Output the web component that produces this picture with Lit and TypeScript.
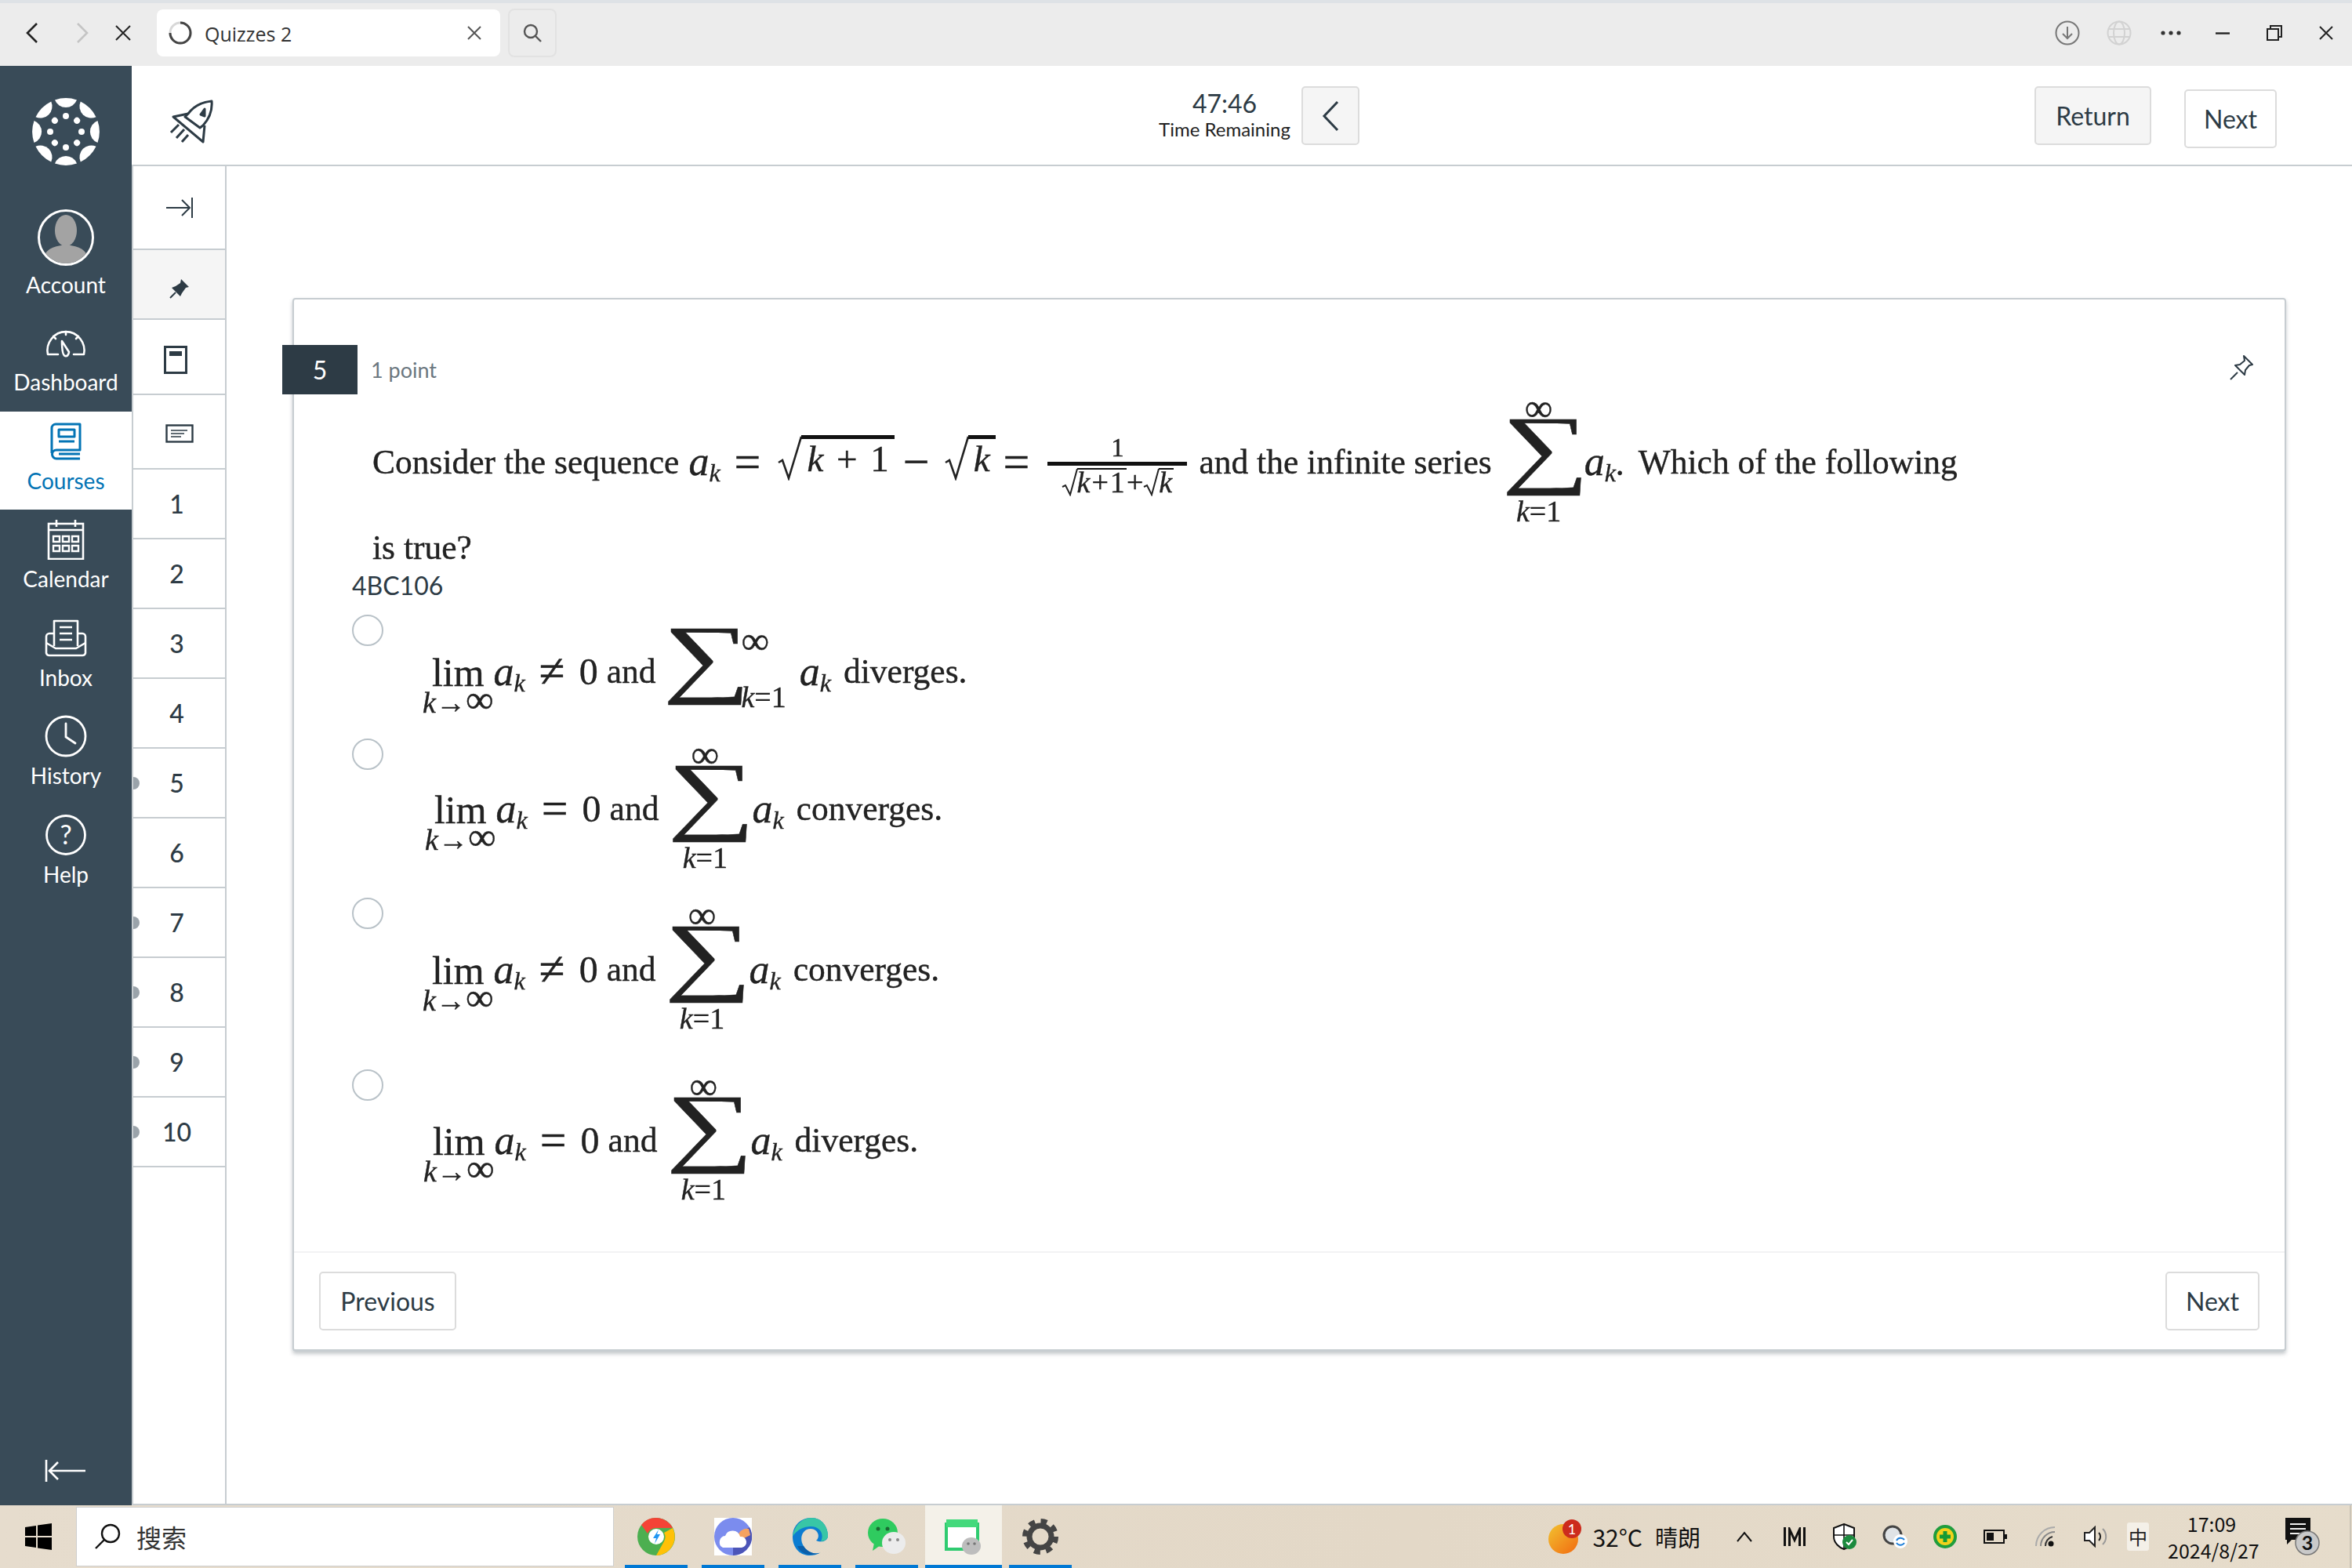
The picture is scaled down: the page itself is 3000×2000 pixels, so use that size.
import { LitElement, html, css, svg } from 'lit';
import { customElement } from 'lit/decorators.js';

const icon = (w: number, h: number, body: unknown, cls = '') =>
  html`<svg class=${cls} width=${w} height=${h} viewBox="0 0 ${w} ${h}" fill="none">${body}</svg>`;

const logo = icon(
  86,
  86,
  svg`<g fill="#fff">${[0, 45, 90, 135, 180, 225, 270, 315].map(
    (a) => svg`<g transform="rotate(${a} 43 43)">
      <path d="M29 2.5A43 43 0 0 1 57 2.5A15 15 0 0 1 29 2.5Z" />
      <circle cx="43" cy="23" r="4" />
    </g>`
  )}</g>`
);

const navItems = [
  {
    label: 'Dashboard',
    icon: icon(
      54,
      38,
      svg`<g stroke="#fff" stroke-width="2.6" stroke-linecap="round" stroke-linejoin="round">
        <path d="M17 34H4A23.500 24 0 1 1 50 34H37" />
        <path d="M22 17L31 31Q30 37 26 36Q22 35 22 17Z" />
        <path d="M27 5V9M11 11L14 14M43 11L40 14" />
      </g>`
    ),
  },
  {
    label: 'Courses',
    active: true,
    icon: icon(
      42,
      48,
      svg`<g stroke="#0374b5" stroke-width="3" stroke-linejoin="round">
        <path d="M3 39V7A5 5 0 0 1 8 2H39V35H9A5.500 5.500 0 0 0 9 46H39M12 40H39" />
        <rect x="12" y="9" width="20" height="9" />
        <path d="M12 24H32" />
      </g>`
    ),
  },
  {
    label: 'Calendar',
    icon: icon(
      48,
      52,
      svg`<g stroke="#fff" stroke-width="2.600">
        <rect x="2" y="6" width="44" height="45" />
        <path d="M2 14H46M12 1V10M36 1V10" />
        <path d="M8 22H16V29H8ZM20 22H28V29H20ZM32 22H40V29H32ZM8 34H16V41H8ZM20 34H28V41H20ZM32 34H40V41H32Z" stroke-width="2.4" />
      </g>`
    ),
  },
  {
    label: 'Inbox',
    icon: icon(
      54,
      48,
      svg`<g stroke="#fff" stroke-width="2.600" stroke-linejoin="round">
        <path d="M12 34V2H42V34" />
        <path d="M19 10H35M19 18H35M19 26H35" />
        <path d="M12 18H6A4 4 0 0 0 2 22V43A4 4 0 0 0 6 46H48A4 4 0 0 0 52 43V22A4 4 0 0 0 48 18H42" />
        <path d="M2 30L14 37H40L52 30" />
      </g>`
    ),
  },
  {
    label: 'History',
    icon: icon(
      54,
      54,
      svg`<g stroke="#fff" stroke-width="2.800" stroke-linecap="round">
        <circle cx="27" cy="27" r="25" />
        <path d="M27 11V28L39 36" />
      </g>`
    ),
  },
  {
    label: 'Help',
    icon: icon(
      52,
      52,
      svg`<circle cx="26" cy="26" r="24.500" stroke="#fff" stroke-width="2.800" />
        <text x="26" y="38" text-anchor="middle" fill="#fff" font-family="Lato, sans-serif" font-size="34">?</text>`
    ),
  },
];

const ak = html`<span class="ak"><i>a</i><sub>k</sub></span>`;
const inf = html`<span class="inf">∞</span>`;

// one sum with its limits stacked, or set beside it for the inline variant
const sum = (beside = false) =>
  beside
    ? html`<span class="sum beside">
        <span class="sigma">∑</span>
        <span class="limits"><span>${inf}</span><span><i>k</i>=1</span></span>
      </span>`
    : html`<span class="sum">
        <span class="lim-text">${inf}</span>
        <span class="sigma">∑</span>
        <span class="lim-text"><i>k</i>=1</span>
      </span>`;

const limit = html`<span class="lim"><span>lim</span><small><i>k</i>→${inf}</small></span>`;

// the radical sign is a stretched stroke, its argument stays text
const root = (inner: unknown, small = false) =>
  small
    ? html`<span class="root tiny">
        ${icon(21, 36, svg`<path d="M1 24L5 22L11 34L20 1" stroke="#222" stroke-width="2" />`)}
        <span class="over">${inner}</span>
      </span>`
    : html`<span class="root">
        ${icon(32, 58, svg`<path d="M2 35L7 32L15 55L31 2" stroke="#222" stroke-width="2.600" />`)}
        <span class="over">${inner}</span>
      </span>`;

const k = html`<i>k</i>`;

const options = [
  { top: 13, left: 50, op: '≠', beside: true, word: 'diverges.', height: 158, sumGap: 11, akGap: 17 },
  { top: 11, left: 53, op: '=', beside: false, word: 'converges.', height: 203, sumGap: 13, akGap: 14 },
  { top: 13, left: 50, op: '≠', beside: false, word: 'converges.', height: 219, sumGap: 13, akGap: 14 },
  { top: 12, left: 51, op: '=', beside: false, word: 'diverges.', height: 220, sumGap: 13, akGap: 14 },
];

@customElement('app-root')
export class AppRoot extends LitElement {
  static styles = css`
    :host {
      display: flex;
      flex-direction: column;
      width: 3000px;
      height: 2000px;
      overflow: hidden;
      background: #fff;
      font-family: Lato, sans-serif;
      color: #2d3b45;
    }
    svg {
      display: block;
      flex: none;
    }

    /* browser bar */
    .chrome {
      height: 84px;
      box-sizing: border-box;
      border-top: 4px solid #dee2e6;
      background: #ececec;
      display: flex;
      align-items: center;
      padding: 0 0 4px 16px;
    }
    .chrome .slot {
      width: 50px;
      margin-right: 14px;
      display: flex;
      justify-content: center;
    }
    .chrome .slot.stop {
      margin-left: -12px;
    }
    .tab {
      width: 438px;
      height: 60px;
      margin-left: 4px;
      margin-right: 10px;
      border-radius: 8px;
      background: #fff;
      display: flex;
      align-items: center;
      padding: 0 24px 0 14px;
      box-sizing: border-box;
      gap: 15px;
      font-family: 'Open Sans', sans-serif;
      font-size: 25px;
      color: #333;
    }
    .tab span {
      flex: 1;
      padding-top: 2px;
    }
    .find {
      width: 62px;
      height: 62px;
      box-sizing: border-box;
      border: 2px solid #e2e2e2;
      border-radius: 8px;
      display: flex;
      align-items: center;
      justify-content: center;
    }
    .win {
      margin-left: auto;
      display: flex;
      align-items: center;
    }
    .win div {
      width: 66px;
      display: flex;
      justify-content: center;
    }

    .mid {
      flex: 1;
      display: flex;
      min-height: 0;
    }

    /* global nav */
    .rail {
      width: 168px;
      background: #394b58;
      color: #fff;
      display: flex;
      flex-direction: column;
      align-items: center;
      font-size: 28px;
    }
    .brand {
      height: 174px;
      padding-top: 41px;
      box-sizing: border-box;
    }
    .account {
      height: 141px;
      display: flex;
      flex-direction: column;
      align-items: center;
      padding-top: 9px;
      box-sizing: border-box;
      gap: 7px;
    }
    .avatar {
      width: 72px;
      height: 72px;
      box-sizing: border-box;
      border: 3px solid #fff;
      border-radius: 50%;
      overflow: hidden;
    }
    .item {
      width: 100%;
      height: 125.500px;
      display: flex;
      flex-direction: column;
      align-items: center;
      box-sizing: border-box;
    }
    .item .ic {
      height: 52px;
      margin-top: 12px;
      margin-bottom: 7px;
      display: flex;
      align-items: center;
    }
    .item.active {
      background: #fff;
      color: #0374b5;
    }
    .label {
      line-height: 34px;
    }
    .collapse {
      margin-top: auto;
      margin-bottom: 29px;
    }

    .main {
      flex: 1;
      display: flex;
      flex-direction: column;
      min-width: 0;
      border-bottom: 2px solid #c7cdd1;
    }

    /* quiz header */
    .head {
      height: 128px;
      box-sizing: border-box;
      border-bottom: 2px solid #c7cdd1;
      display: flex;
      align-items: flex-start;
      position: relative;
    }
    .rocket {
      margin: 43px 0 0 47px;
    }
    .timer {
      margin-left: 1204px;
      width: 170px;
      text-align: center;
      margin-top: 30px;
    }
    .timer b {
      display: block;
      font-weight: 400;
      font-size: 32px;
      line-height: 36px;
    }
    .timer span {
      display: block;
      font-size: 24px;
      line-height: 30px;
      color: #222;
      white-space: nowrap;
    }
    .btn {
      box-sizing: border-box;
      height: 75px;
      border: 2px solid #dcdcdc;
      border-radius: 5px;
      background: #fff;
      display: flex;
      align-items: center;
      justify-content: center;
      font-size: 32px;
      color: #2d3b45;
    }
    .btn.grey {
      background: #f5f5f5;
    }
    .chev {
      width: 74px;
      margin: 26px 0 0 13px;
    }
    .return {
      width: 149px;
      margin: 26px 0 0 861px;
    }
    .next {
      width: 118px;
      margin: 30px 0 0 42px;
    }

    .body {
      flex: 1;
      display: flex;
      min-height: 0;
    }

    /* question list */
    .qnav {
      width: 121px;
      box-sizing: border-box;
      border-left: 2px solid #c7cdd1;
      border-right: 2px solid #c7cdd1;
      display: flex;
      flex-direction: column;
    }
    .tool {
      display: flex;
      align-items: center;
      justify-content: center;
      border-bottom: 2px solid #c7cdd1;
      box-sizing: border-box;
    }
    .q {
      height: 89px;
      box-sizing: border-box;
      border-bottom: 2px solid #c7cdd1;
      display: flex;
      align-items: center;
      justify-content: center;
      font-size: 32px;
      font-weight: 500;
      position: relative;
      padding-right: 6px;
    }
    .q.seen::before {
      content: '';
      position: absolute;
      left: 0;
      top: 36px;
      width: 8px;
      height: 16px;
      border-radius: 0 8px 8px 0;
      background: #9aa3aa;
    }

    /* question card */
    .card {
      width: 2543px;
      height: 1344px;
      margin: 168px 0 0 84px;
      box-sizing: border-box;
      border: 2px solid #c7cdd1;
      border-bottom-width: 3px;
      border-radius: 4px;
      box-shadow: 0 3px 5px rgba(90, 100, 110, 0.35);
      display: flex;
      flex-direction: column;
    }
    .qhead {
      display: flex;
      align-items: center;
      margin: 58px 0 0 -15px;
      height: 63px;
    }
    .badge {
      width: 96px;
      height: 63px;
      background: #2d3b45;
      color: #fff;
      font-size: 32px;
      display: flex;
      align-items: center;
      justify-content: center;
    }
    .points {
      margin-left: 17px;
      font-size: 27px;
      color: #6b7780;
    }
    .pin {
      margin-left: auto;
      margin-right: 40px;
      margin-top: -6px;
    }

    /* math, a slightly soft image in the original */
    .m {
      font-family: 'Liberation Serif', serif;
      font-size: 43.5px;
      color: #222;
      filter: blur(0.6px);
      -webkit-text-stroke: 0.4px #222;
      display: flex;
      align-items: center;
      white-space: nowrap;
    }
    .line1 {
      margin: -1px 0 0 100px;
      height: 173px;
    }
    .line2 {
      margin: -2px 0 0 100px;
      height: 50px;
    }
    .ak {
      font-size: 52px;
    }
    .ak sub {
      font-size: 32px;
      font-style: italic;
      vertical-align: -8px;
      line-height: 0;
    }
    .op {
      font-size: 60px;
      line-height: 50px;
    }
    .num {
      font-size: 48px;
    }
    .inf {
      font-size: 50px;
      line-height: 26px;
    }
    .sigma {
      font-size: 112px;
      line-height: 100px;
      height: 100px;
      width: 68px;
      margin: 0 12px;
      text-align: center;
      display: block;
      font-weight: 400;
      transform: translateY(-17px) scaleX(1.4);
    }
    .sum {
      display: flex;
      flex-direction: column;
      align-items: center;
      margin-top: -4px;
    }
    .sum.beside {
      flex-direction: row;
    }
    .lim-text,
    .limits {
      font-size: 38px;
      line-height: 30px;
      height: 30px;
    }
    .limits {
      display: flex;
      flex-direction: column;
      justify-content: space-between;
      height: 100px;
      margin-left: 6px;
    }
    .lim {
      display: flex;
      flex-direction: column;
      align-items: center;
      padding-top: 36px;
      font-size: 50px;
      line-height: 50px;
    }
    .lim small {
      font-size: 38px;
      line-height: 30px;
      height: 36px;
      margin-top: -4px;
    }
    .root {
      display: inline-flex;
      align-items: flex-start;
    }
    .over {
      border-top: 5px solid #111;
      margin-left: -1px;
      line-height: 50px;
      font-size: 47px;
      padding: 0 7px;
      word-spacing: 5px;
    }
    .tiny .over {
      border-top-width: 2px;
      line-height: 32px;
      font-size: 38px;
      padding: 0;
      word-spacing: 0;
      letter-spacing: 2px;
    }
    .frac {
      display: flex;
      flex-direction: column;
      align-items: center;
      font-size: 33px;
      width: 178px;
      line-height: 36px;
      margin-top: 8px;
    }
    .frac hr {
      width: 100%;
      height: 5px;
      background: #111;
      border: 0;
      margin: 0 0 3px;
    }
    .den {
      display: flex;
      align-items: flex-start;
      font-size: 38px;
    }
    .code {
      margin: 1px 0 14px 74px;
      height: 46px;
      line-height: 46px;
      font-size: 32px;
    }
    .option {
      display: flex;
      align-items: flex-start;
      margin-left: 74px;
      box-sizing: border-box;
    }
    .radio {
      width: 40px;
      height: 40px;
      box-sizing: border-box;
      border: 2px solid #b9c2c8;
      border-radius: 50%;
      background: #fff;
      flex: none;
    }
    .foot {
      margin-top: auto;
      height: 125px;
      box-sizing: border-box;
      border-top: 2px solid #f2f3f4;
      display: flex;
      align-items: center;
      justify-content: space-between;
      padding: 0 32px;
    }
    .foot .btn {
      height: 75px;
    }
    .prev {
      width: 175px;
    }
    .foot .fnext {
      width: 120px;
    }

    /* windows taskbar */
    .task {
      height: 80px;
      background: linear-gradient(90deg, #e6dccd, #e3d8c7 60%, #e6dccb);
      display: flex;
      align-items: center;
      font-family: 'Noto Sans CJK SC', sans-serif;
      color: #111;
    }
    .start {
      width: 97px;
      display: flex;
      justify-content: center;
    }
    .search {
      width: 686px;
      height: 76px;
      box-sizing: border-box;
      background: #fff;
      border: 1px solid #cfcfcf;
      display: flex;
      align-items: center;
      gap: 20px;
      padding-left: 22px;
      font-size: 32px;
      color: #333;
    }
    .apps {
      display: flex;
      margin-left: 5px;
      height: 80px;
    }
    .app {
      width: 98px;
      height: 80px;
      box-sizing: border-box;
      display: flex;
      align-items: center;
      justify-content: center;
      position: relative;
    }
    .app::after {
      content: '';
      position: absolute;
      left: 9px;
      right: 9px;
      bottom: 0;
      height: 4px;
      background: #0078d4;
    }
    .app.on {
      background: #f4f1e9;
    }
    .app.on::after {
      left: 0;
      right: 0;
    }
    .tray {
      margin-left: auto;
      display: flex;
      align-items: center;
      height: 80px;
    }
    .weather {
      display: flex;
      align-items: center;
      font-size: 30px;
      margin-right: 24px;
    }
    .weather span {
      margin-left: 14px;
    }
    .weather .cn {
      margin-left: 16px;
      font-size: 29px;
    }
    .sl {
      width: 64px;
      display: flex;
      justify-content: center;
    }
    .sl.ime {
      width: 44px;
      font-size: 24px;
      line-height: 36px;
      color: #222;
    }
    .ime span {
      background: rgba(248, 245, 239, 0.8);
      padding: 0 2px;
      border-radius: 3px;
    }
    .clock {
      width: 112px;
      margin-left: 16px;
      text-align: center;
      font-size: 25px;
      line-height: 34px;
      white-space: nowrap;
    }
    .note {
      width: 120px;
      display: flex;
      justify-content: center;
    }
    .edge {
      width: 3px;
      height: 80px;
      border-left: 2px solid #cbc4b7;
      box-sizing: border-box;
    }
  `;

  private renderChrome() {
    const x = (s: number, c: string) =>
      icon(s, s, svg`<path d="M1 1L${s - 1} ${s - 1}M${s - 1} 1L1 ${s - 1}" stroke=${c} stroke-width="2" />`);
    return html`<div class="chrome">
      <div class="slot">${icon(18, 28, svg`<path d="M15 2L3 14L15 26" stroke="#222" stroke-width="2.600" />`)}</div>
      <div class="slot">${icon(18, 28, svg`<path d="M3 2L15 14L3 26" stroke="#c4c4c4" stroke-width="2.600" />`)}</div>
      <div class="slot stop">${x(20, '#222')}</div>
      <div class="tab">
        ${icon(
          32,
          32,
          svg`<circle cx="16" cy="16" r="13" stroke="#d8d8d8" stroke-width="3" />
            <path d="M3 16A13 13 0 0 0 29 16A13 13 0 0 0 16 3" stroke="#444" stroke-width="3" />`
        )}
        <span>Quizzes 2</span>
        ${x(18, '#555')}
      </div>
      <div class="find">
        ${icon(
          26,
          26,
          svg`<circle cx="11" cy="11" r="8" stroke="#555" stroke-width="2.400" /><path d="M17 17L24 24" stroke="#555" stroke-width="2.400" />`
        )}
      </div>
      <div class="win">
        <div>
          ${icon(
            32,
            32,
            svg`<circle cx="16" cy="16" r="14.500" stroke="#777" stroke-width="2" /><path d="M16 8V23M10 17L16 23L22 17" stroke="#777" stroke-width="2" />`
          )}
        </div>
        <div>
          ${icon(
            32,
            32,
            svg`<g stroke="#d2d2d2" stroke-width="2"><circle cx="16" cy="16" r="14.500" /><ellipse cx="16" cy="16" rx="7" ry="14.500" /><path d="M2 11H30M2 21H30" /></g>`
          )}
        </div>
        <div>
          ${icon(
            26,
            6,
            svg`<g fill="#333"><circle cx="3" cy="3" r="2.600" /><circle cx="13" cy="3" r="2.600" /><circle cx="23" cy="3" r="2.600" /></g>`
          )}
        </div>
        <div>${icon(18, 3, svg`<path d="M0 1.500H18" stroke="#222" stroke-width="2.400" />`)}</div>
        <div>
          ${icon(
            20,
            20,
            svg`<path d="M5 4V1H19V15H15" stroke="#222" stroke-width="2" /><rect x="1" y="5" width="14" height="14" stroke="#222" stroke-width="2" />`
          )}
        </div>
        <div>${x(18, '#222')}</div>
      </div>
    </div>`;
  }

  private renderRail() {
    return html`<nav class="rail">
      <div class="brand">${logo}</div>
      <div class="account">
        <div class="avatar">
          ${icon(
            66,
            66,
            svg`<ellipse cx="33" cy="24" rx="14" ry="20" fill="#a3a3a3" /><path d="M4 62C6 46 20 44 33 42C46 44 60 46 62 62Q33 74 4 62Z" fill="#a3a3a3" />`
          )}
        </div>
        <div class="label">Account</div>
      </div>
      ${navItems.map(
        (n) => html`<div class="item ${n.active ? 'active' : ''}">
          <div class="ic">${n.icon}</div>
          <div class="label">${n.label}</div>
        </div>`
      )}
      <div class="collapse">
        ${icon(
          54,
          30,
          svg`<path d="M2 1V29M52 15H6M17 4L6 15L17 26" stroke="#fff" stroke-width="2.600" />`
        )}
      </div>
    </nav>`;
  }

  private renderHead() {
    return html`<header class="head">
      <div class="rocket">
        ${icon(
          58,
          56,
          svg`<g stroke="#2d3b45" stroke-width="3" stroke-linejoin="round">
            <path d="M25 18C33 7 44 3 55 2C56 13 52 24 44 33L40 36L21 22Z" />
            <path d="M25 18L6 22L44 54L46 33" />
            <path d="M3 42L13 32M10 49L20 38M17 54L25 45" />
            <path d="M46 12L41 19L46 21Z" fill="#2d3b45" />
          </g>`
        )}
      </div>
      <div class="timer"><b>47:46</b><span>Time Remaining</span></div>
      <div class="btn grey chev">
        ${icon(22, 40, svg`<path d="M20 2L3 20L20 38" stroke="#2d3b45" stroke-width="3" />`)}
      </div>
      <div class="btn grey return">Return</div>
      <div class="btn next">Next</div>
    </header>`;
  }

  private renderQuestions() {
    const seen = [5, 7, 8, 9, 10];
    return html`<aside class="qnav">
      <div class="tool" style="height:107px">
        ${icon(
          36,
          26,
          svg`<path d="M1 13H30M21 3L31 13L21 23M34 0V26" stroke="#2d3b45" stroke-width="2" />`
        )}
      </div>
      <div class="tool" style="height:89px;background:#f5f5f5;padding-top:10px">
        ${icon(
          26,
          26,
          svg`<path d="M15 1L25 11L21 12L16 19L14 23L3 12L8 10L14 6Z" fill="#2d3b45" /><path d="M8 18L1 25" stroke="#2d3b45" stroke-width="2" />`
        )}
      </div>
      <div class="tool" style="height:96px;padding:8px 10px 0 0">
        ${icon(
          30,
          36,
          svg`<rect x="1.500" y="1.500" width="27" height="33" stroke="#2d3b45" stroke-width="3" /><rect x="7" y="7" width="16" height="6" fill="#2d3b45" />`
        )}
      </div>
      <div class="tool" style="height:95px;padding-top:5px">
        ${icon(
          36,
          24,
          svg`<rect x="1.500" y="1.500" width="33" height="21" stroke="#2d3b45" stroke-width="2.400" /><path d="M7 8H28M7 12H24M7 16H20" stroke="#2d3b45" stroke-width="1.600" />`
        )}
      </div>
      ${[1, 2, 3, 4, 5, 6, 7, 8, 9, 10].map(
        (n) => html`<div class="q ${seen.includes(n) ? 'seen' : ''}">${n}</div>`
      )}
    </aside>`;
  }

  private renderCard() {
    const ml = (px: number) => `margin-left:${px}px`;
    return html`<section class="card">
      <div class="qhead">
        <div class="badge">5</div>
        <div class="points">1 point</div>
        <div class="pin">
          ${icon(
            30,
            32,
            svg`<g stroke="#2d3b45" stroke-width="2" stroke-linejoin="round"><path d="M18 1L29 12L25 13L20 19L19 25L7 13L13 12L19 7Z" /><path d="M10 22L1 31" /></g>`
          )}
        </div>
      </div>
      <div class="m line1">
        <span>Consider the sequence</span>
        <span style=${ml(12)}>${ak}</span>
        <span class="op" style=${ml(18)}>=</span>
        <span style=${ml(21)}>${root(html`${k} + 1`)}</span>
        <span class="op" style=${ml(11)}>−</span>
        <span style=${ml(18)}>${root(k)}</span>
        <span class="op" style=${ml(10)}>=</span>
        <span class="frac" style=${ml(23)}>
          <span>1</span>
          <hr />
          <span class="den">${root(html`${k}+1`, true)}<span>+</span>${root(k, true)}</span>
        </span>
        <span style=${ml(15)}>and the infinite series</span>
        <span style=${ml(14)}>${sum()}</span>
        <span style=${ml(12)}>${ak}.</span>
        <span style=${ml(18)}>Which of the following</span>
      </div>
      <div class="m line2">is true?</div>
      <div class="code">4BC106</div>
      ${options.map(
        (o) => html`<div class="option" style="height:${o.height}px">
          <div class="radio"></div>
          <div class="m" style="margin-top:${o.top}px;margin-left:${o.left}px">
            ${limit}
            <span>${ak}</span>
            <span class="op" style=${ml(18)}>${o.op}</span>
            <span class="num" style=${ml(18)}>0</span>
            <span style=${ml(11)}>and</span>
            <span style=${ml(o.sumGap)}>${sum(o.beside)}</span>
            <span style=${ml(o.akGap)}>${ak}</span>
            <span style=${ml(16)}>${o.word}</span>
          </div>
        </div>`
      )}
      <div class="foot">
        <div class="btn prev">Previous</div>
        <div class="btn fnext">Next</div>
      </div>
    </section>`;
  }

  private renderTask() {
    const apps = [
      svg`<circle cx="24" cy="24" r="24" fill="#4caf50" />
        <path d="M24 0A24 24 0 0 1 45 13H24A11 11 0 0 0 13 20L5 9A24 24 0 0 1 24 0Z" fill="#f44336" />
        <path d="M45 13A24 24 0 0 1 24 48L34 30A11 11 0 0 0 34 19Z" fill="#ffc107" />
        <circle cx="24" cy="24" r="10" fill="#fff" /><path d="M27 15L20 26H24L22 33L29 21H25Z" fill="#2196f3" />`,
      svg`<rect width="48" height="48" fill="#fff" /><circle cx="24" cy="24" r="24" fill="#7b8cee" />
        <path d="M24 48A24 24 0 0 0 45 12L24 24Z" fill="#4c55b8" /><path d="M30 24A12 12 0 0 1 44 14L46 22L34 28Z" fill="#f4a261" />
        <path d="M11 38A8 8 0 0 1 14 23A10 10 0 0 1 33 24A7 7 0 0 1 35 38Z" fill="#fff" />`,
      svg`<path d="M2 24C2 9 13 0 26 0C40 0 47 12 47 23C47 30 38 32 32 29C38 24 34 14 25 14C14 14 10 27 16 36C20 43 30 48 38 44C33 47 28 48 24 48C11 48 2 38 2 24Z" fill="#0b7cd1" />
        <path d="M2 24C4 10 14 0 26 0C40 0 47 12 47 23C47 27 43 30 38 30C43 20 36 10 24 11C13 12 6 17 2 24Z" fill="#38c6a6" />
        <path d="M16 36C20 43 30 48 38 44C30 48 14 50 8 36Z" fill="#0b5ea8" />`,
      svg`<ellipse cx="19" cy="19" rx="19" ry="18" fill="#2fcb5f" /><path d="M8 32L6 42L16 35Z" fill="#2fcb5f" />
        <circle cx="13" cy="14" r="2.500" fill="#1a6a33" /><circle cx="25" cy="14" r="2.500" fill="#1a6a33" />
        <ellipse cx="33" cy="32" rx="15" ry="14" fill="#ececec" /><circle cx="28" cy="28" r="2" fill="#888" /><circle cx="38" cy="28" r="2" fill="#888" />`,
      svg`<path d="M2 8H42V40H2Z" fill="#fff" stroke="#2fcb70" stroke-width="4" /><path d="M2 2H42V12H2Z" fill="#43d97c" />
        <ellipse cx="34" cy="36" rx="12" ry="11" fill="#bdbdbd" /><circle cx="30" cy="33" r="1.800" fill="#777" /><circle cx="38" cy="33" r="1.800" fill="#777" />`,
      svg`<circle cx="24" cy="24" r="14" stroke="#444" stroke-width="7" />
        <circle cx="24" cy="24" r="20" stroke="#444" stroke-width="6" stroke-dasharray="8 7.700" />`,
    ];
    return html`<footer class="task">
      <div class="start">
        ${icon(
          34,
          34,
          svg`<path d="M0 5L14 3V16H0ZM16 2.500L34 0V16H16ZM0 18H14V31L0 29ZM16 18H34V34L16 31.500Z" fill="#000" />`
        )}
      </div>
      <div class="search">
        ${icon(
          34,
          34,
          svg`<circle cx="21" cy="13" r="11" stroke="#111" stroke-width="2.400" /><path d="M13 21L2 32" stroke="#111" stroke-width="2.400" />`
        )}
        <span>搜索</span>
      </div>
      <div class="apps">
        ${apps.map((a, i) => html`<div class="app ${i === 4 ? 'on' : ''}">${icon(48, 48, a)}</div>`)}
      </div>
      <div class="tray">
        <div class="weather">
          ${icon(
            42,
            44,
            svg`<defs><linearGradient id="w" x1="0" y1="0" x2="1" y2="1"><stop offset="0" stop-color="#f2c230" /><stop offset="1" stop-color="#f26a10" /></linearGradient></defs>
              <circle cx="19" cy="25" r="19" fill="url(#w)" /><circle cx="30" cy="12" r="12" fill="#cc2b1d" />
              <text x="30" y="19" text-anchor="middle" font-size="18" fill="#fff" font-family="Lato, sans-serif">1</text>`
          )}
          <span>32°C</span><span class="cn">晴朗</span>
        </div>
        <div class="sl">${icon(20, 14, svg`<path d="M1 13L10 2L19 13" stroke="#111" stroke-width="2" />`)}</div>
        <div class="sl">
          ${icon(
            30,
            24,
            svg`<path d="M1 0H4V24H1ZM26 0H29V24H26ZM7 0H9L15 13L21 0H23V24H20V9L15 20L10 9V24H7Z" fill="#111" />`
          )}
        </div>
        <div class="sl">
          ${icon(
            30,
            34,
            svg`<path d="M14 1L27 6V17C27 25 20 31 14 33C8 31 1 25 1 17V6Z" fill="#fff" stroke="#111" stroke-width="2" />
              <path d="M14 1V33M1 15H27" stroke="#111" stroke-width="1.600" />
              <circle cx="21" cy="24" r="9" fill="#1b8a3e" /><path d="M17 24L20 27L25 21" stroke="#fff" stroke-width="2" />`
          )}
        </div>
        <div class="sl">
          ${icon(
            32,
            30,
            svg`<circle cx="13" cy="13" r="11" fill="#dfe3e6" stroke="#444" stroke-width="3" />
              <circle cx="23" cy="21" r="9" fill="#fff" /><path d="M18 20A6 6 0 0 1 28 19M28 23A6 6 0 0 1 18 23" stroke="#1e7fd8" stroke-width="2" />`
          )}
        </div>
        <div class="sl">
          ${icon(
            30,
            32,
            svg`<circle cx="15" cy="16" r="15" fill="#1f9d3d" /><circle cx="15" cy="16" r="11" fill="#f2d21c" />
              <path d="M15 9V23M8 16H22" stroke="#159a35" stroke-width="5" />`
          )}
        </div>
        <div class="sl">
          ${icon(
            30,
            20,
            svg`<rect x="1" y="2" width="25" height="16" stroke="#111" stroke-width="2" /><rect x="4" y="5" width="9" height="10" fill="#111" /><rect x="27" y="7" width="3" height="6" fill="#111" />`
          )}
        </div>
        <div class="sl">
          ${icon(
            26,
            26,
            svg`<g stroke-width="2"><path d="M1 25A24 24 0 0 1 25 1" stroke="#aaa" /><path d="M7 25A18 18 0 0 1 25 7" stroke="#888" /><path d="M13 25A12 12 0 0 1 22 13" stroke="#333" /></g><circle cx="20" cy="22" r="3.500" fill="#111" />`
          )}
        </div>
        <div class="sl">
          ${icon(
            32,
            28,
            svg`<path d="M2 9H8L15 2V26L8 19H2Z" fill="#fff" stroke="#222" stroke-width="2" /><path d="M20 9A7 7 0 0 1 20 19" stroke="#222" stroke-width="2" /><path d="M25 4A14 14 0 0 1 25 24" stroke="#999" stroke-width="2" />`
          )}
        </div>
        <div class="sl ime"><span>中</span></div>
        <div class="clock">17:09<br />2024/8/27</div>
        <div class="note">
          ${icon(
            48,
            48,
            svg`<path d="M2 0H34V28H10L4 34V28H2Z" fill="#111" /><path d="M8 8H28M8 14H28M8 20H22" stroke="#eee" stroke-width="2" />
              <circle cx="30" cy="32" r="15" fill="#c9c9c9" stroke="#777" stroke-width="1.500" />
              <text x="30" y="41" text-anchor="middle" font-size="25" font-weight="700" fill="#111" font-family="Lato, sans-serif">3</text>`
          )}
        </div>
        <div class="edge"></div>
      </div>
    </footer>`;
  }

  render() {
    return html`
      ${this.renderChrome()}
      <div class="mid">
        ${this.renderRail()}
        <div class="main">
          ${this.renderHead()}
          <div class="body">${this.renderQuestions()} ${this.renderCard()}</div>
        </div>
      </div>
      ${this.renderTask()}
    `;
  }
}
